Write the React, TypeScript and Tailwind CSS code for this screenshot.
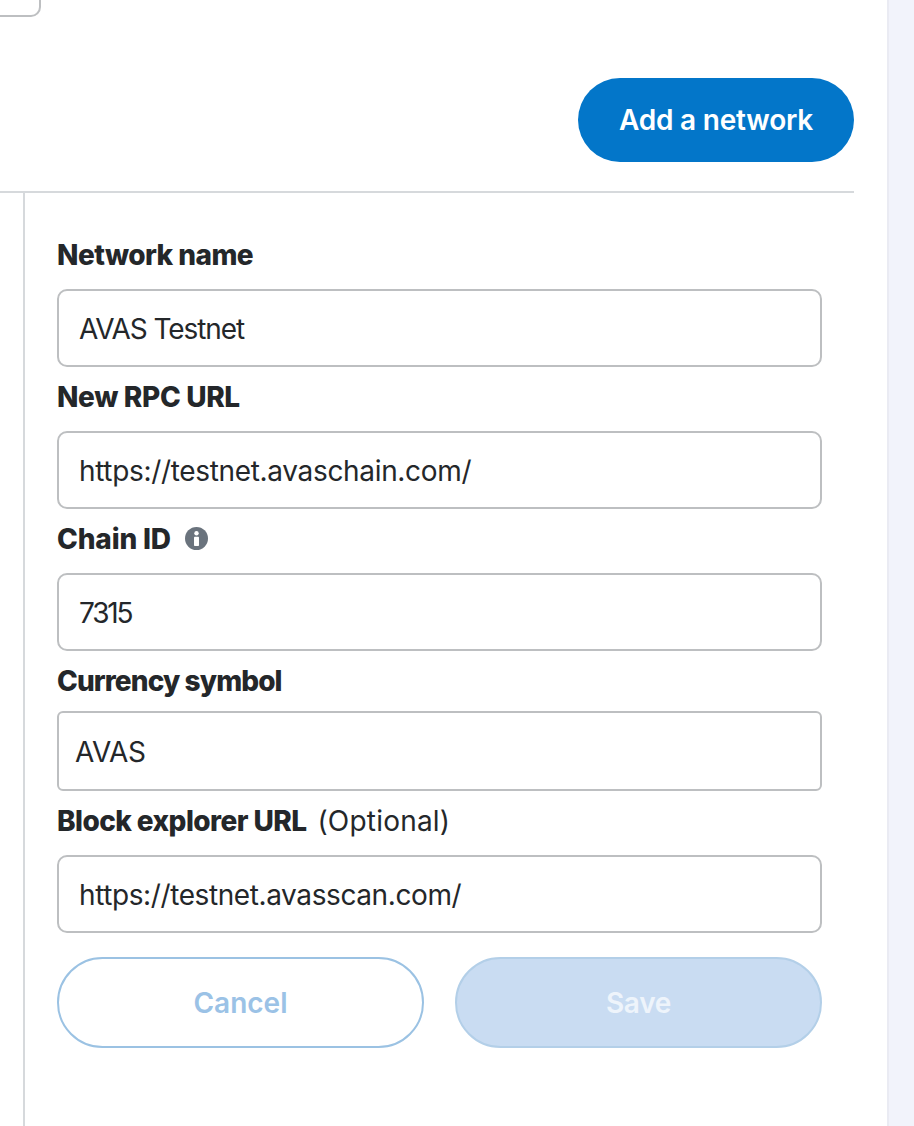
const labelClass = "flex h-[24px] items-center text-[28px] font-extrabold leading-none text-[#24272a]";

function Field({ label, value, extra, rowClass, boxClass, labelTrack }: { label: string; value: string; extra?: React.ReactNode; rowClass: string; boxClass: string; labelTrack: string }) {
  return (
    <div className="flex flex-col">
      <div className={`shrink-0 ${rowClass}`}>
        <div className={`${labelClass} ${labelTrack}`}>
          {label}
          {extra}
        </div>
      </div>
      <div className={`flex items-center border-2 border-[#bdbfc1] bg-white pt-[1px] text-[28px] text-[#24272a] ${boxClass}`}>
        {value}
      </div>
    </div>
  );
}

function InfoIcon() {
  return (
    <svg viewBox="0 0 24 24" className="ml-[14px] h-[23px] w-[23px] -translate-y-[1px]">
      <circle cx="12" cy="12" r="12" fill="#6a737d" />
      <circle cx="12" cy="6.6" r="2.3" fill="#fff" />
      <rect x="9.4" y="10.2" width="5.2" height="9.6" rx="0.8" fill="#fff" />
    </svg>
  );
}

export default function App() {
  return (
    <div className="flex h-[1126px] w-[914px] overflow-hidden bg-[#f2f3fb] font-['Inter',sans-serif]">
      <div className="flex h-full w-[887px] shrink-0 flex-col bg-white">
        <div className="flex h-[191px] shrink-0 flex-col pr-[33px]">
          <div className="h-[17px] w-[41px] rounded-br-[10px] border-b-2 border-r-2 border-[#bdbfc1]" />
          <div className="mt-[61px] flex justify-end">
            <button className="flex h-[84px] w-[276px] items-center justify-center rounded-full bg-[#0376c9] text-[28px] font-semibold tracking-[-0.2px] text-white">
              Add a network
            </button>
          </div>
        </div>
        <div className="mr-[33px] flex min-h-0 flex-1 border-t-2 border-[#d6d9dc]">
          <div className="w-[23px] shrink-0" />
          <div className="flex-1 border-l-2 border-[#d6d9dc] px-[32px] pt-[50px]">
            <div className="flex flex-col gap-[18px]">
              <Field label="Network name" labelTrack="tracking-[-0.55px]" value="AVAS Testnet" rowClass="h-[46px]" boxClass="h-[78px] rounded-[10px] pl-[20px] tracking-[-1.1px]" />
              <Field label="New RPC URL" labelTrack="tracking-[-0.35px]" value="https://testnet.avaschain.com/" rowClass="h-[46px]" boxClass="h-[78px] rounded-[10px] pl-[20px] tracking-[-0.33px]" />
              <Field label="Chain ID" labelTrack="tracking-[-0.15px]" value="7315" extra={<InfoIcon />} rowClass="h-[46px]" boxClass="h-[78px] rounded-[10px] pl-[20px] tracking-[-2.2px]" />
              <Field label="Currency symbol" labelTrack="tracking-[-0.9px]" value="AVAS" rowClass="h-[42px]" boxClass="h-[80px] rounded-[6px] pl-[16px] tracking-[-0.4px]" />
              <Field
                label="Block explorer URL"
                labelTrack="tracking-[-0.57px]"
                value="https://testnet.avasscan.com/"
                extra={<span className="ml-[11px] font-normal tracking-[0.2px]">(Optional)</span>}
                rowClass="h-[46px]"
                boxClass="h-[78px] rounded-[10px] pl-[20px] tracking-[-0.4px]"
              />
            </div>
            <div className="mt-[24px] flex gap-[31px]">
              <button className="h-[91px] flex-1 rounded-full border-2 border-[#9bc2e3] bg-white text-[28px] font-semibold tracking-[0px] text-[#9bc2e6]">
                Cancel
              </button>
              <button className="h-[91px] flex-1 rounded-full border-2 border-[#b3cfe8] bg-[#c9dcf2] text-[28px] font-semibold tracking-[-0.3px] text-[#eef4fb]">
                Save
              </button>
            </div>
          </div>
        </div>
      </div>
      <div className="h-full flex-1 border-l-2 border-[#eaebf3]" />
    </div>
  );
}
